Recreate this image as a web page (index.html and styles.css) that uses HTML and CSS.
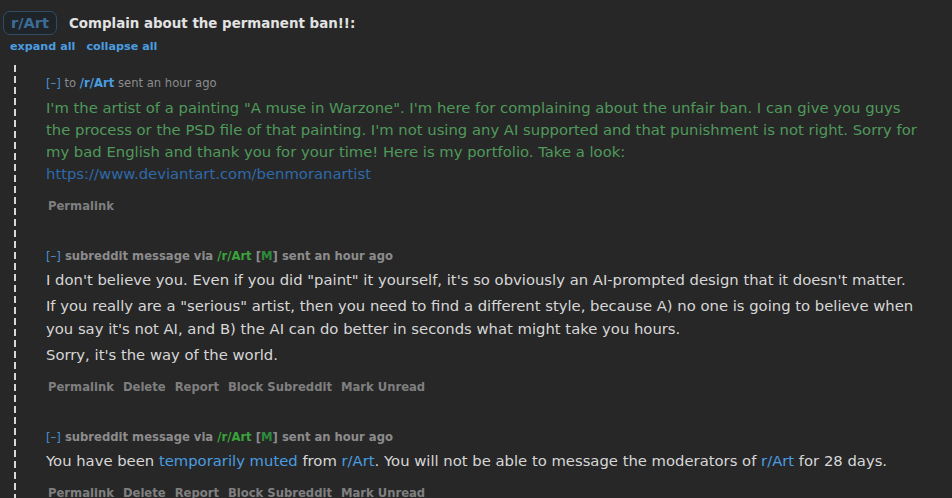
FILE: index.html
```html
<!DOCTYPE html>
<html>
<head>
<meta charset="utf-8">
<link rel="stylesheet" href="styles.css">
</head>
<body>
<div class="page">
  <div class="subject">
    <span class="badge">r/Art</span>
    <span class="title">Complain about the permanent ban!!:</span>
  </div>
  <div class="toggles"><a>expand all</a><a>collapse all</a></div>
  <div class="thread">
    <div class="msg">
      <div class="meta normal"><span class="tog">[–]</span> to <a class="sub">/r/Art</a> sent an hour ago</div>
      <div class="body green">
        <p>I'm the artist of a painting "A muse in Warzone". I'm here for complaining about the unfair ban. I can give you guys the process or the PSD file of that painting. I'm not using any AI supported and that punishment is not right. Sorry for my bad English and thank you for your time! Here is my portfolio. Take a look:<br><a class="dlink">https://www.deviantart.com/benmoranartist</a></p>
      </div>
      <div class="actions"><a>Permalink</a></div>
    </div>
    <div class="msg">
      <div class="meta"><span class="tog">[–]</span> subreddit message via <a class="modsub">/r/Art</a> <span class="mod">[<span class="m">M</span>]</span> sent an hour ago</div>
      <div class="body">
        <p>I don't believe you. Even if you did "paint" it yourself, it's so obviously an AI-prompted design that it doesn't matter.</p>
        <p>If you really are a "serious" artist, then you need to find a different style, because A) no one is going to believe when you say it's not AI, and B) the AI can do better in seconds what might take you hours.</p>
        <p>Sorry, it's the way of the world.</p>
      </div>
      <div class="actions"><a>Permalink</a><a>Delete</a><a>Report</a><a>Block Subreddit</a><a>Mark Unread</a></div>
    </div>
    <div class="msg">
      <div class="meta"><span class="tog">[–]</span> subreddit message via <a class="modsub">/r/Art</a> <span class="mod">[<span class="m">M</span>]</span> sent an hour ago</div>
      <div class="body">
        <p>You have been <a class="blue">temporarily muted</a> from <a class="blue">r/Art</a>. You will not be able to message the moderators of <a class="blue">r/Art</a> for 28 days.</p>
      </div>
      <div class="actions"><a>Permalink</a><a>Delete</a><a>Report</a><a>Block Subreddit</a><a>Mark Unread</a></div>
    </div>
  </div>
</div>
</body>
</html>
```
FILE: styles.css
```css
html, body {
  margin: 0;
  padding: 0;
  background: #272728;
  height: 100%;
  overflow: hidden;
}
body {
  font-family: "DejaVu Sans", Verdana, sans-serif;
  color: #d7d7d7;
}
.page {
  padding: 11px 0 0 3px;
}
.subject {
  display: flex;
  align-items: center;
  gap: 12px;
}
.badge {
  border: 1px solid #2f4c66;
  border-radius: 7px;
  padding: 2px 7px 3px;
  color: #3c6c98;
  background: #1f2429;
  font-size: 14.6px;
  font-weight: bold;
  line-height: 17px;
}
.title {
  font-size: 13.4px;
  font-weight: bold;
  color: #e2e2e2;
}
.toggles {
  margin: 5px 0 0 7px;
  font-size: 11.2px;
  font-weight: bold;
  display: flex;
  gap: 11px;
}
.toggles a { color: #4a9de0; }
.thread {
  margin: 12px 0 0 11px;
  padding-left: 32px;
  padding-top: 10px;
  background: repeating-linear-gradient(to bottom, #d8d8d8 0 7px, transparent 7px 11px) 0 0 / 2px 100% no-repeat;
}
.msg {
  margin-bottom: 35px;
}
.meta {
  font-size: 11.6px;
  font-weight: bold;
  color: #8c8c8c;
  line-height: 16px;
}
.meta.normal { font-weight: normal; color: #8c8c8c; }
.tog { color: #4a8fd0; font-weight: normal; }
.sub { color: #4a9de0; font-weight: bold; }
.modsub { color: #3aa33a; }
.mod { color: #8c8c8c; }
.m { color: #2e8b3e; }
.body {
  font-size: 14.8px;
  line-height: 23px;
  margin-top: 4px;
  max-width: 880px;
}
.body p { margin: 0 0 3px; }
.green { color: #4f9a5a; line-height: 22px; margin-top: 6px; }
.dlink { color: #2f6aa8; }
.blue { color: #4a9de0; }
.actions {
  margin-top: 14px;
  font-size: 11.6px;
  font-weight: bold;
  display: flex;
  gap: 9px;
  padding-left: 2px;
}
.actions a { color: #7f7f7f; }
```
